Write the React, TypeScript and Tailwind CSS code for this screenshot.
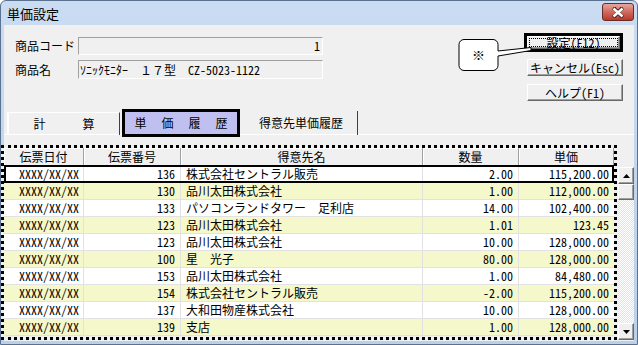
const rows = [
  { no: "136", name: "株式会社セントラル販売", qty: "2.00", price: "115,200.00" },
  { no: "130", name: "品川太田株式会社", qty: "1.00", price: "112,000.00" },
  { no: "133", name: "パソコンランドタワー　足利店", qty: "14.00", price: "102,400.00" },
  { no: "123", name: "品川太田株式会社", qty: "1.01", price: "123.45" },
  { no: "123", name: "品川太田株式会社", qty: "10.00", price: "128,000.00" },
  { no: "100", name: "星　光子", qty: "80.00", price: "128,000.00" },
  { no: "153", name: "品川太田株式会社", qty: "1.00", price: "84,480.00" },
  { no: "154", name: "株式会社セントラル販売", qty: "-2.00", price: "115,200.00" },
  { no: "137", name: "大和田物産株式会社", qty: "10.00", price: "128,000.00" },
  { no: "139", name: "支店", qty: "1.00", price: "128,000.00" },
];

// half-width latin, like the old gothic bitmap font
const hw = "[font-feature-settings:'hwid']";

const raised =
  "bg-[#f0f0f0] border border-t-white border-l-white border-r-[#696969] border-b-[#696969] shadow-[inset_-1px_-1px_0_#a0a0a0]";

function Arrow({ down }: { down?: boolean }) {
  return (
    <svg width="7" height="4" viewBox="0 0 7 4">
      <path d={down ? "M0 0h7L3.5 4z" : "M0 4h7L3.5 0z"} fill="#000" />
    </svg>
  );
}

export default function App() {
  return (
    <div className="relative flex h-[345px] w-[638px] flex-col overflow-hidden rounded-t-[6px] border border-[#5a7290] bg-gradient-to-b from-[#cadcf1] to-[#b9d1ea] font-['Noto_Sans_CJK_JP',sans-serif] text-[12px] leading-none text-black">
      {/* title bar */}
      <div className="flex h-[24px] items-center justify-between pl-[6px] pr-[3px]">
        <span className="text-[13px]">単価設定</span>
        <div className="mt-[-2px] flex h-[18px] w-[32px] items-center justify-center rounded-[3px] border border-[#6b2a25] bg-gradient-to-b from-[#e6a79f] via-[#cf6a5e] to-[#b9382c]">
          <svg width="14" height="11" viewBox="0 0 14 11">
            <path
              d="M2 1l5 3.5L12 1M2 10l5-4 5 4M3 1l4 4.5L11 1M3 10l4-4.5L11 10"
              stroke="#3b2220"
              strokeWidth="3.4"
              fill="none"
            />
            <path d="M2.5 1.5L11.5 9.5M11.5 1.5L2.5 9.5" stroke="#fff" strokeWidth="2.4" fill="none" />
          </svg>
        </div>
      </div>

      {/* body */}
      <div className="mx-[3px] mb-[3px] flex flex-1 flex-col bg-[#f0f0f0]">
        <div className="flex h-[85px] justify-between">
          <div className="pl-[11px] pt-[12px]">
            <div className="flex h-[18px] items-center">
              <span className="w-[63px]">商品コード</span>
              <div className={`flex h-[18px] w-[245px] items-center justify-end border border-t-[#a0a0a0] border-l-[#a0a0a0] border-b-white border-r-white pr-[2px] ${hw}`}>
                1
              </div>
            </div>
            <div className="mt-[5px] flex h-[19px] items-center">
              <span className="w-[63px]">商品名</span>
              <div className="flex h-[19px] w-[245px] items-center whitespace-pre border border-t-[#a0a0a0] border-l-[#a0a0a0] border-b-white border-r-white pl-[1px]">
                <span>ｿﾆｯｸﾓﾆﾀｰ　１７型　</span>
                <span className={hw}>CZ-5023-1122</span>
              </div>
            </div>
          </div>
          <div className={`flex flex-col items-end pr-[11px] pt-[8px] ${hw}`}>
            <div className="h-[19px] w-[99px] border-[3px] border-black">
              <div className={`flex h-full w-full items-center justify-center p-[1px] ${raised}`}>
                <div className="flex h-full w-full items-center justify-center border border-dotted border-black">
                  設定(F12)
                </div>
              </div>
            </div>
            <div className={`mt-[7px] flex h-[17px] w-[96px] items-center justify-center ${raised}`}>
              キャンセル(Esc)
            </div>
            <div className={`mt-[8px] flex h-[17px] w-[96px] items-center justify-center ${raised}`}>
              ヘルプ(F1)
            </div>
          </div>
        </div>

        {/* tabs */}
        <div className="flex h-[25px] items-start border-b border-white">
          <div className="ml-[3px] mt-[2px] flex h-[23px] w-[113px] items-center justify-center gap-[37px] border-l-2 border-t border-r border-l-white border-t-white border-r-[#404040]">
            <span>計</span>
            <span>算</span>
          </div>
          <div className="relative z-10 ml-[2px] mt-[-1px] flex h-[28px] w-[118px] items-center justify-center gap-[15px] border-[3px] border-black bg-[#c0c0f0]">
            <span>単</span>
            <span>価</span>
            <span>履</span>
            <span>歴</span>
          </div>
          <div className="ml-[5px] mt-[1px] flex h-[24px] w-[113px] items-center justify-center border-r border-r-[#404040]">
            得意先単価履歴
          </div>
        </div>

        {/* grid */}
        <div className="ml-[-3px] mt-[10px] flex">
          <div className="w-[616px] border-[3px] border-dotted border-black bg-[#f0f0f0]">
            <div className="flex h-[18px]">
              {[
                ["伝票日付", "w-[80px]"],
                ["伝票番号", "w-[97px]"],
                ["得意先名", "w-[242px]"],
                ["数量", "w-[96px]"],
                ["単価", "w-[95px]"],
              ].map(([t, w]) => (
                <div
                  key={t}
                  className={`${w} flex items-center justify-center border-r border-b border-r-[#a0a0a0] border-b-[#a0a0a0] shadow-[inset_1px_1px_0_#fff]`}
                >
                  {t}
                </div>
              ))}
            </div>
            {rows.map((r, i) => (
              <div
                key={i}
                className={`relative flex h-[17px] border-b border-[#e2e2e2] ${i % 2 === 0 ? "bg-white" : "bg-[#f5f8cb]"}`}
              >
                <div className={`flex w-[80px] items-center justify-end border-r border-[#e2e2e2] pr-[4px] ${hw}`}>XXXX/XX/XX</div>
                <div className={`flex w-[97px] items-center justify-end border-r border-[#e2e2e2] pr-[5px] ${hw}`}>{r.no}</div>
                <div className="flex w-[242px] items-center whitespace-pre border-r border-[#e2e2e2] pl-[5px]">{r.name}</div>
                <div className={`flex w-[96px] items-center justify-end border-r border-[#e2e2e2] pr-[5px] ${hw}`}>{r.qty}</div>
                <div className={`flex w-[95px] items-center justify-end pr-[5px] ${hw}`}>{r.price}</div>
                {i === 0 && <div className="absolute inset-x-0 -top-[1px] -bottom-[1px] border-[2px] border-black" />}
              </div>
            ))}
          </div>

          {/* scrollbar */}
          <div className="ml-[1px] mt-[22px] flex h-[173px] w-[16px] flex-col bg-[repeating-conic-gradient(#ffffff_0%_25%,#e3e3e3_0%_50%)] bg-[length:2px_2px]">
            <div className={`flex h-[17px] items-center justify-center ${raised}`}>
              <Arrow />
            </div>
            <div className={`h-[16px] ${raised}`} />
            <div className="flex-1" />
            <div className={`flex h-[17px] items-center justify-center ${raised}`}>
              <Arrow down />
            </div>
          </div>
        </div>
      </div>

      {/* callout balloon */}
      <svg className="absolute left-[455px] top-[36px]" width="80" height="36" viewBox="0 0 80 36">
        <path
          d="M8 2.5h29a5 5 0 0 1 5 5v6.5L75 10.5v3L42 19v9.5a5 5 0 0 1-5 5H8a5 5 0 0 1-5-5V7.5a5 5 0 0 1 5-5z"
          fill="#fff"
          stroke="#000"
          strokeWidth="1"
        />
        <text x="22.5" y="22.5" fontSize="13" textAnchor="middle" fontFamily="Noto Sans CJK JP">
          ※
        </text>
      </svg>
    </div>
  );
}
